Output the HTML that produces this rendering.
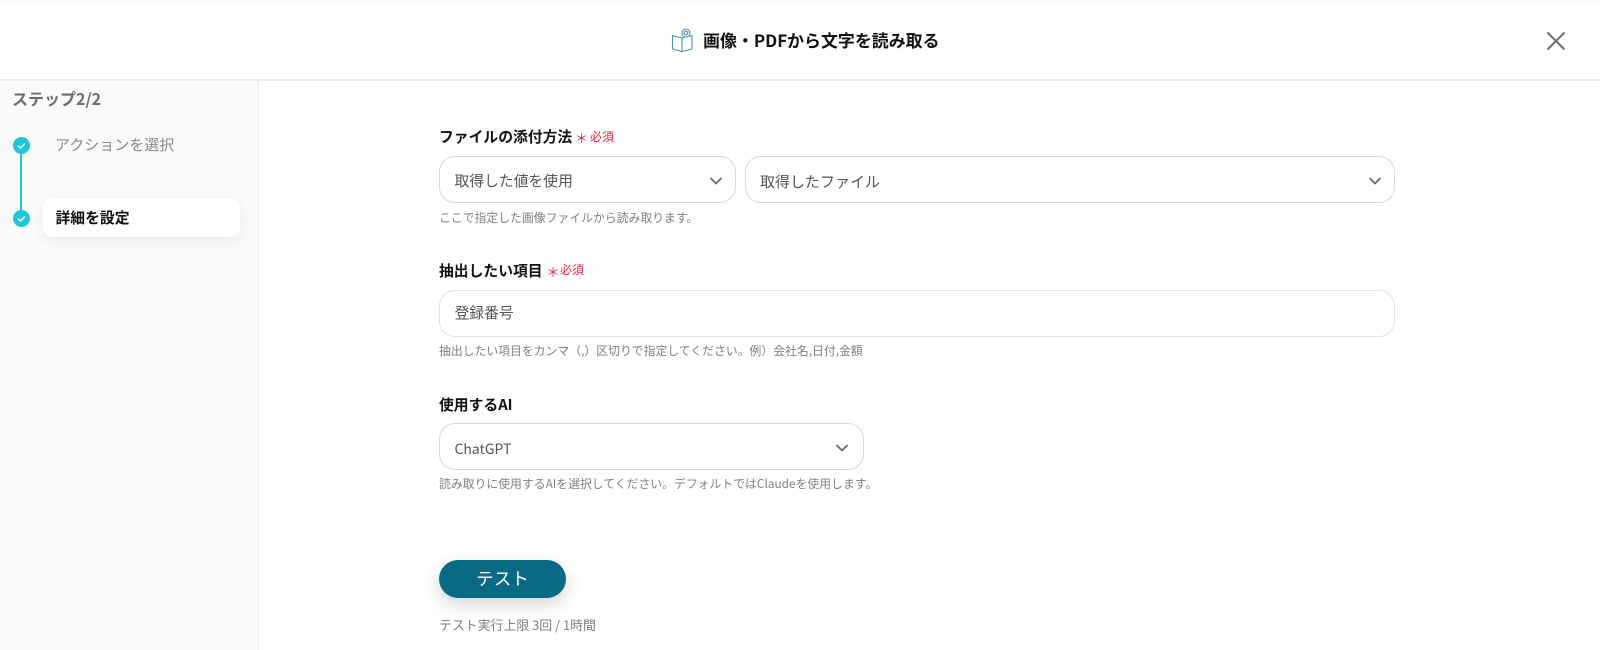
<!DOCTYPE html>
<html lang="ja"><head><meta charset="utf-8"><title>画像・PDFから文字を読み取る</title>
<style>
*{box-sizing:border-box}
html,body{margin:0;padding:0;width:1600px;height:650px;overflow:hidden;background:#fff;font-family:"Noto Sans CJK JP","Liberation Sans",sans-serif}
.a{position:absolute;white-space:nowrap;line-height:1}
.box{position:absolute;background:#fff;border:1px solid #d8d8de;border-radius:16px;height:47px}
.val{font-size:14.8px;color:#555}
.lab{font-size:14.800px;font-weight:700;color:#111}
.hint{font-size:11.850px;color:#808080}
.red{color:#f01f45}
.req{font-size:12px}
.ast{font-size:13px}
.ck{position:absolute}
</style></head><body>
<div class="a" style="left:0;top:0;width:1600px;height:3px;background:#f8f8fd"></div>
<div class="a" style="left:0;top:79px;width:1600px;height:2px;background:#ebebeb"></div>
<div class="a" style="left:0;top:81px;width:259px;height:569px;background:#fafafa;border-right:1px solid #ececec"></div>

<svg class="ck" style="left:671px;top:28px" width="24" height="25" viewBox="0 0 24 25" fill="none" stroke="#4a93a8" stroke-width="1.100">
<path d="M1.500 7.500l9.500 2.500v13.500L1.500 21zM11 10l3-1M18 8.500l3-1V21l-10 2.500"/><circle cx="15" cy="5" r="4"/><circle cx="15" cy="5" r="1.800"/></svg>
<div class="a" style="left:703px;top:32px;font-size:16.950px;font-weight:700;color:#111">画像・PDFから文字を読み取る</div>
<svg class="ck" style="left:1546px;top:31px" width="20" height="20" viewBox="0 0 20 20" stroke="#707070" stroke-width="2" fill="none"><path d="M1.500 1.500l17 17M18.500 1.500l-17 17"/></svg>

<div class="a" style="left:12px;top:90px;font-size:16px;font-weight:700;color:#6b6b6b">ステップ2/2</div>
<div class="a" style="left:20.300px;top:150px;width:1.600px;height:64px;background:#22c3d6"></div>
<svg class="ck" style="left:12.500px;top:137px" width="17" height="17" viewBox="0 0 17 17"><circle cx="8.500" cy="8.500" r="8.500" fill="#1fc5d8"/><path d="M5 8.700l2.500 2.300L12 6.500" stroke="#fff" stroke-width="1.500" fill="none"/></svg>
<svg class="ck" style="left:12.500px;top:209.500px" width="17" height="17" viewBox="0 0 17 17"><circle cx="8.500" cy="8.500" r="8.500" fill="#1fc5d8"/><path d="M5 8.700l2.500 2.300L12 6.500" stroke="#fff" stroke-width="1.500" fill="none"/></svg>
<div class="a" style="left:55px;top:137px;font-size:15px;color:#888">アクションを選択</div>
<div class="a" style="left:42.500px;top:198px;width:197.500px;height:39px;background:#fff;border-radius:10px;box-shadow:0 4px 14px rgba(0,0,0,.07)"></div>
<div class="a" style="left:55.500px;top:210.500px;font-size:14.800px;font-weight:700;color:#111">詳細を設定</div>

<div class="a lab" style="left:439px;top:130px">ファイルの添付方法</div>
<div class="a red ast" style="left:575px;top:130.500px">＊</div>
<div class="a red req" style="left:590px;top:131px">必須</div>
<div class="box" style="left:439px;top:156px;width:297px"></div>
<div class="a val" style="left:454.500px;top:174px">取得した値を使用</div>
<svg class="ck" style="left:708.500px;top:176px" width="14" height="10" viewBox="0 0 14 10" stroke="#666" stroke-width="1.700" fill="none"><path d="M1.500 2l5.500 5.500L12.500 2"/></svg>
<div class="box" style="left:745px;top:156px;width:650px"></div>
<div class="a val" style="left:760px;top:174px;font-size:15px">取得したファイル</div>
<svg class="ck" style="left:1367.500px;top:176px" width="14" height="10" viewBox="0 0 14 10" stroke="#666" stroke-width="1.700" fill="none"><path d="M1.500 2l5.500 5.500L12.500 2"/></svg>
<div class="a hint" style="left:439px;top:212px">ここで指定した画像ファイルから読み取ります。</div>

<div class="a lab" style="left:439px;top:263.500px">抽出したい項目</div>
<div class="a red ast" style="left:546.500px;top:264.500px">＊</div>
<div class="a red req" style="left:560px;top:264px">必須</div>
<div class="box" style="left:439px;top:290px;width:956px;border-color:#e2e2ea;border-width:1.500px"></div>
<div class="a val" style="left:454.500px;top:306px">登録番号</div>
<div class="a hint" style="left:439px;top:344.500px">抽出したい項目をカンマ（,）区切りで指定してください。例）会社名,日付,金額</div>

<div class="a lab" style="left:439px;top:398px">使用するAI</div>
<div class="box" style="left:439px;top:423px;width:425px"></div>
<div class="a val" style="left:454.500px;top:441.500px;font-size:14px">ChatGPT</div>
<svg class="ck" style="left:835px;top:443px" width="14" height="10" viewBox="0 0 14 10" stroke="#666" stroke-width="1.700" fill="none"><path d="M1.500 2l5.500 5.500L12.500 2"/></svg>
<div class="a hint" style="left:439px;top:477.500px">読み取りに使用するAIを選択してください。デフォルトではClaudeを使用します。</div>

<div class="a" style="left:439px;top:560px;width:127px;height:38px;background:#086a84;border-radius:19px;box-shadow:0 6px 18px rgba(0,0,0,.18)"></div>
<div class="a" style="left:439px;top:570px;width:127px;text-align:center;font-size:17.600px;color:#fff">テスト</div>
<div class="a" style="left:439px;top:618.500px;font-size:12.900px;color:#808080">テスト実行上限 3回 / 1時間</div>
</body></html>
